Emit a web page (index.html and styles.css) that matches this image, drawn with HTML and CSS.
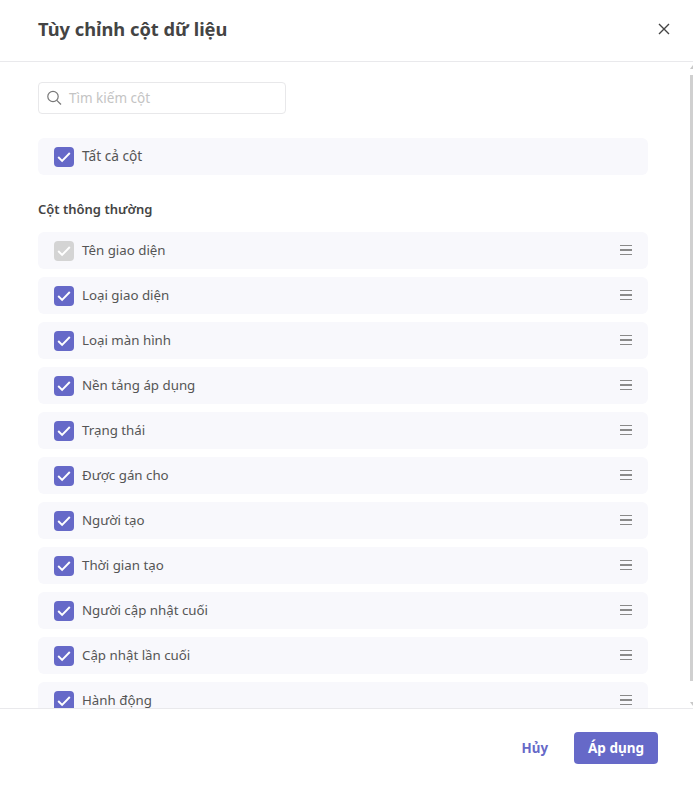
FILE: index.html
```html
<!DOCTYPE html>
<html lang="vi">
<head>
    <meta charset="UTF-8">
    <meta name="viewport" content="width=device-width, initial-scale=1.0">
    <title>Tùy chỉnh cột dữ liệu</title>
    <link rel="stylesheet" href="styles.css">
</head>
<body>
    <div class="modal">
        <div class="modal-header">
            <div class="modal-title">Tùy chỉnh cột dữ liệu</div>
            <svg class="close-icon" width="12" height="12" viewBox="0 0 12 12"><path d="M1 1l10 10M11 1L1 11" stroke="#444" stroke-width="1.4" fill="none"/></svg>
        </div>
        <div class="modal-body">
            <div class="search-box">
                <svg width="16" height="16" viewBox="0 0 16 16"><circle cx="6" cy="6.5" r="5.2" stroke="#777" stroke-width="1.2" fill="none"/><path d="M9.8 10.3L14 14.5" stroke="#777" stroke-width="1.2" fill="none"/></svg>
                <span class="search-placeholder">Tìm kiếm cột</span>
            </div>
            <div class="column-row all-row">
                <span class="check"><svg width="20" height="20" viewBox="0 0 20 20"><path d="M4.2 10l3.9 3.9L15.8 6" stroke="#fff" stroke-width="1.9" fill="none"/></svg></span>
                <span class="column-name all-name">Tất cả cột</span>
            </div>
            <div class="section-title">Cột thông thường</div>
            <div class="column-list" id="column-list"></div>
        </div>
        <div class="scroll-bar">
            <div class="scroll-up"></div>
            <div class="scroll-thumb"></div>
            <div class="scroll-down"></div>
        </div>
        <div class="modal-footer">
            <button class="btn-cancel">Hủy</button>
            <button class="btn-apply">Áp dụng</button>
        </div>
    </div>

<script>
    const columns = ['Tên giao diện', 'Loại giao diện', 'Loại màn hình', 'Nền tảng áp dụng', 'Trạng thái', 'Được gán cho', 'Người tạo', 'Thời gian tạo', 'Người cập nhật cuối', 'Cập nhật lần cuối', 'Hành động'];
    const list = document.getElementById('column-list');

    columns.forEach((name, index) => {
        const row = document.createElement('div');
        row.className = 'column-row';
        row.innerHTML = `
            <span class="check ${index === 0 ? 'check-disabled' : ''}"><svg width="20" height="20" viewBox="0 0 20 20"><path d="M4.2 10l3.9 3.9L15.8 6" stroke="#fff" stroke-width="1.9" fill="none"/></svg></span>
            <span class="column-name">${name}</span>
            <span class="drag-handle"><i></i><i></i><i></i></span>`;
        list.appendChild(row);
    });
</script>
</body>
</html>
```

FILE: styles.css
```css
body, html {
    margin: 0;
    padding: 0;
    width: 100%;
    height: 100%;
    overflow: hidden;
    background-color: #ffffff;
    font-family: 'Noto Sans', sans-serif;
}
.modal {
    position: relative;
    display: flex;
    flex-direction: column;
    height: 786px;
}
.modal-header {
    flex: 0 0 57px;
    display: flex;
    align-items: center;
    justify-content: space-between;
    padding: 0 23px 4px 38px;
    border-bottom: 1px solid #e9e9ec;
}
.modal-title {
    color: #444444;
    font-size: 18.3px;
    font-weight: 700;
}
.modal-body {
    flex: 1;
    min-height: 0;
    overflow: hidden;
    padding: 20px 45px 0 38px;
}
.search-box {
    display: flex;
    align-items: center;
    gap: 6px;
    width: 248px;
    height: 32px;
    box-sizing: border-box;
    padding-left: 8px;
    border: 1px solid #e8e8ea;
    border-radius: 4px;
}
.search-placeholder {
    color: #c4c4c4;
    font-size: 13.5px;
}
.column-row {
    display: flex;
    align-items: center;
    height: 37px;
    padding: 0 16px;
    background-color: #f8f8fc;
    border-radius: 6px;
}
.all-row {
    margin-top: 24px;
}
.section-title {
    margin: 25px 0 13px;
    color: #444444;
    font-size: 13px;
    font-weight: 600;
    line-height: 19px;
}
.column-list {
    display: flex;
    flex-direction: column;
    gap: 8px;
}
.check {
    flex: 0 0 20px;
    height: 20px;
    margin-right: 8px;
    background-color: #6669c8;
    border-radius: 4px;
}
.check-disabled {
    background-color: #d4d4d4;
}
.check svg {
    display: block;
}
.column-name {
    flex: 1;
    padding-bottom: 2px;
    color: #555555;
    font-size: 13.3px;
}
.all-name {
    font-size: 13.7px;
}
.drag-handle {
    display: flex;
    flex-direction: column;
    gap: 3px;
    width: 12px;
    margin-bottom: 1px;
}
.drag-handle i {
    height: 1.5px;
    background-color: #8a8a8a;
}
.scroll-bar {
    position: absolute;
    top: 62px;
    right: 0;
    bottom: 78px;
    width: 3px;
    display: flex;
    flex-direction: column;
}
.scroll-up {
    height: 0;
    margin-top: 3px;
    border-left: 3px solid transparent;
    border-bottom: 4px solid #c8c8c8;
}
.scroll-thumb {
    height: 606px;
    margin-top: 6px;
    background-color: #d0d0d0;
}
.scroll-down {
    height: 0;
    margin-top: 21px;
    border-left: 3px solid transparent;
    border-top: 4px solid #c8c8c8;
}
.modal-footer {
    flex: 0 0 77px;
    display: flex;
    align-items: center;
    justify-content: flex-end;
    gap: 26px;
    padding: 0 35px 0 0;
    border-top: 1px solid #e9e9ec;
    background-color: #ffffff;
}
.btn-cancel {
    border: none;
    padding: 0;
    background: none;
    color: #6669c8;
    font-family: inherit;
    font-size: 13.3px;
    font-weight: 700;
}
.btn-apply {
    width: 84px;
    height: 32px;
    border: none;
    border-radius: 4px;
    background-color: #6669c8;
    color: #ffffff;
    font-family: inherit;
    font-size: 13.5px;
    font-weight: 700;
}
```
